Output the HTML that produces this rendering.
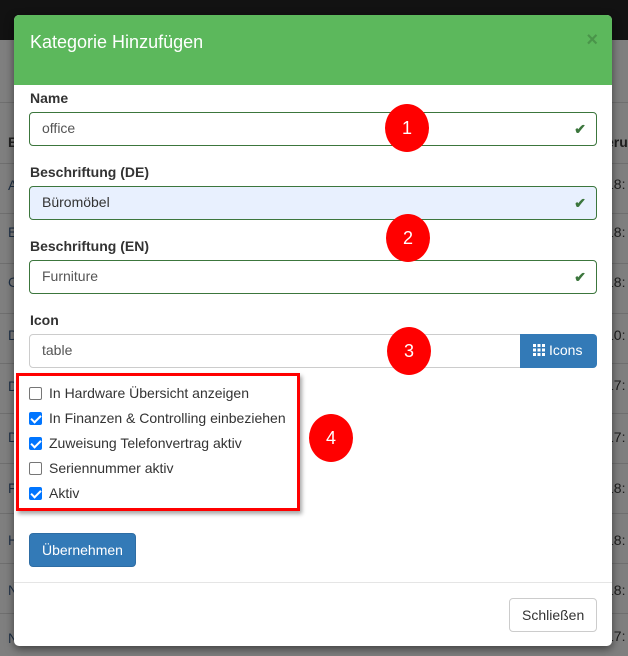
<!DOCTYPE html>
<html><head><meta charset="utf-8"><style>
*{box-sizing:border-box;margin:0;padding:0}
body{width:628px;height:656px;overflow:hidden;background:#7f7f7f;font-family:"Liberation Sans",sans-serif;font-size:14px;color:#333;position:relative}
.top{position:absolute;left:0;top:0;width:628px;height:40px;background:#121212}
.row{position:absolute;left:0;width:628px;border-top:1px solid #6f6f6f}
.bl{position:absolute;left:8px;color:#1d2f45;font-size:14px}
.br{position:absolute;left:606px;color:#1d1d1d;font-size:14px}
.modal{position:absolute;left:14px;top:15px;width:598px;height:631px;background:#fff;border-radius:5px;overflow:hidden;box-shadow:0 3px 9px rgba(0,0,0,.5)}
.hdr{height:70px;background:#5cb85c;color:#fff;font-size:18px;padding:17px 16px}
.x{position:absolute;right:14px;top:14px;color:#3f7f3f;font-weight:bold;font-size:20px;opacity:.6}
.lbl{position:absolute;left:16px;font-weight:bold;font-size:14px}
.inp{position:absolute;left:15px;width:568px;height:34px;border:1px solid #3c763d;border-radius:4px;padding:7px 12px;font-size:14px;color:#555}
.ck{position:absolute;right:10px;top:8px;color:#3c763d;font-weight:bold}
.cb{position:absolute;left:15px;height:20px;font-size:14px;color:#333}
.box{display:inline-block;width:13px;height:13px;border:1px solid #767676;border-radius:2px;vertical-align:-2px;margin-right:7px;background:#fff}
.on{background:#0075ff;border-color:#0075ff;position:relative}
.on:after{content:"";position:absolute;left:3px;top:0px;width:4px;height:8px;border:solid #fff;border-width:0 2px 2px 0;transform:rotate(45deg)}
.circ{position:absolute;width:44px;height:48px;border-radius:50%;background:#f00;color:#fff;font-size:18px;text-align:center;line-height:48px}
</style></head><body>
<div class="top"></div>
<div class="row" style="top:102px"></div><div class="row" style="top:163px"></div><div class="row" style="top:213px"></div><div class="row" style="top:263px"></div><div class="row" style="top:313px"></div><div class="row" style="top:363px"></div><div class="row" style="top:413px"></div><div class="row" style="top:463px"></div><div class="row" style="top:513px"></div><div class="row" style="top:563px"></div><div class="row" style="top:613px"></div>
<div class="bl" style="top:134px;color:#222;font-weight:bold">B</div><div class="bl" style="top:177px">A</div><div class="bl" style="top:224px">E</div><div class="bl" style="top:274px">C</div><div class="bl" style="top:327px">D</div><div class="bl" style="top:378px">D</div><div class="bl" style="top:429px">D</div><div class="bl" style="top:480px">F</div><div class="bl" style="top:532px">H</div><div class="bl" style="top:582px">N</div><div class="bl" style="top:630px">N</div>
<div class="br" style="top:134px;font-weight:bold">eru</div><div class="br" style="top:176px">18:</div><div class="br" style="top:224px">18:</div><div class="br" style="top:274px">18:</div><div class="br" style="top:327px">10:</div><div class="br" style="top:377px">17:</div><div class="br" style="top:429px">17:</div><div class="br" style="top:480px">18:</div><div class="br" style="top:532px">18:</div><div class="br" style="top:582px">18:</div><div class="br" style="top:628px">17:</div>
<div class="modal">
<div class="hdr">Kategorie Hinzufügen</div><div class="x">×</div>
<div class="lbl" style="top:75px">Name</div>
<div class="inp" style="top:97px">office<span class="ck">✔</span></div>
<div class="lbl" style="top:149px">Beschriftung (DE)</div>
<div class="inp" style="top:171px;background:#e8f0fe;color:#333">Büromöbel<span class="ck">✔</span></div>
<div class="lbl" style="top:223px">Beschriftung (EN)</div>
<div class="inp" style="top:245px">Furniture<span class="ck">✔</span></div>
<div class="lbl" style="top:297px">Icon</div>
<div class="inp" style="top:319px;width:492px;border-color:#ccc;border-radius:4px 0 0 4px">table</div>
<div style="position:absolute;left:506px;top:319px;width:77px;height:34px;background:#337ab7;border-radius:0 4px 4px 0;color:#fff;padding:8px 0 0 13px;font-size:14px"><svg width="12" height="12" style="vertical-align:-1px;margin-right:4px" fill="#fff"><rect x="0" y="0" width="3" height="3"/><rect x="4.5" y="0" width="3" height="3"/><rect x="9" y="0" width="3" height="3"/><rect x="0" y="4.5" width="3" height="3"/><rect x="4.5" y="4.5" width="3" height="3"/><rect x="9" y="4.5" width="3" height="3"/><rect x="0" y="9" width="3" height="3"/><rect x="4.5" y="9" width="3" height="3"/><rect x="9" y="9" width="3" height="3"/></svg>Icons</div>
<div style="position:absolute;left:2px;top:358px;width:284px;height:138px;border:3px solid #f00;box-shadow:2px 3px 4px rgba(0,0,0,.35)"></div>
<div class="cb" style="top:370px"><span class="box"></span>In Hardware Übersicht anzeigen</div>
<div class="cb" style="top:395px"><span class="box on"></span>In Finanzen &amp; Controlling einbeziehen</div>
<div class="cb" style="top:420px"><span class="box on"></span>Zuweisung Telefonvertrag aktiv</div>
<div class="cb" style="top:445px"><span class="box"></span>Seriennummer aktiv</div>
<div class="cb" style="top:470px"><span class="box on"></span>Aktiv</div>
<div style="position:absolute;left:15px;top:518px;width:107px;height:34px;background:#337ab7;border:1px solid #2e6da4;border-radius:4px;color:#fff;padding:8px 12px">Übernehmen</div>
<div style="position:absolute;left:0;top:567px;width:598px;border-top:1px solid #e5e5e5"></div>
<div style="position:absolute;left:495px;top:583px;width:88px;height:34px;border:1px solid #ccc;border-radius:4px;padding:8px 12px;color:#333">Schließen</div>
</div>
<div class="circ" style="left:385px;top:104px">1</div>
<div class="circ" style="left:386px;top:214px">2</div>
<div class="circ" style="left:387px;top:327px">3</div>
<div class="circ" style="left:309px;top:414px">4</div>
</body></html>
